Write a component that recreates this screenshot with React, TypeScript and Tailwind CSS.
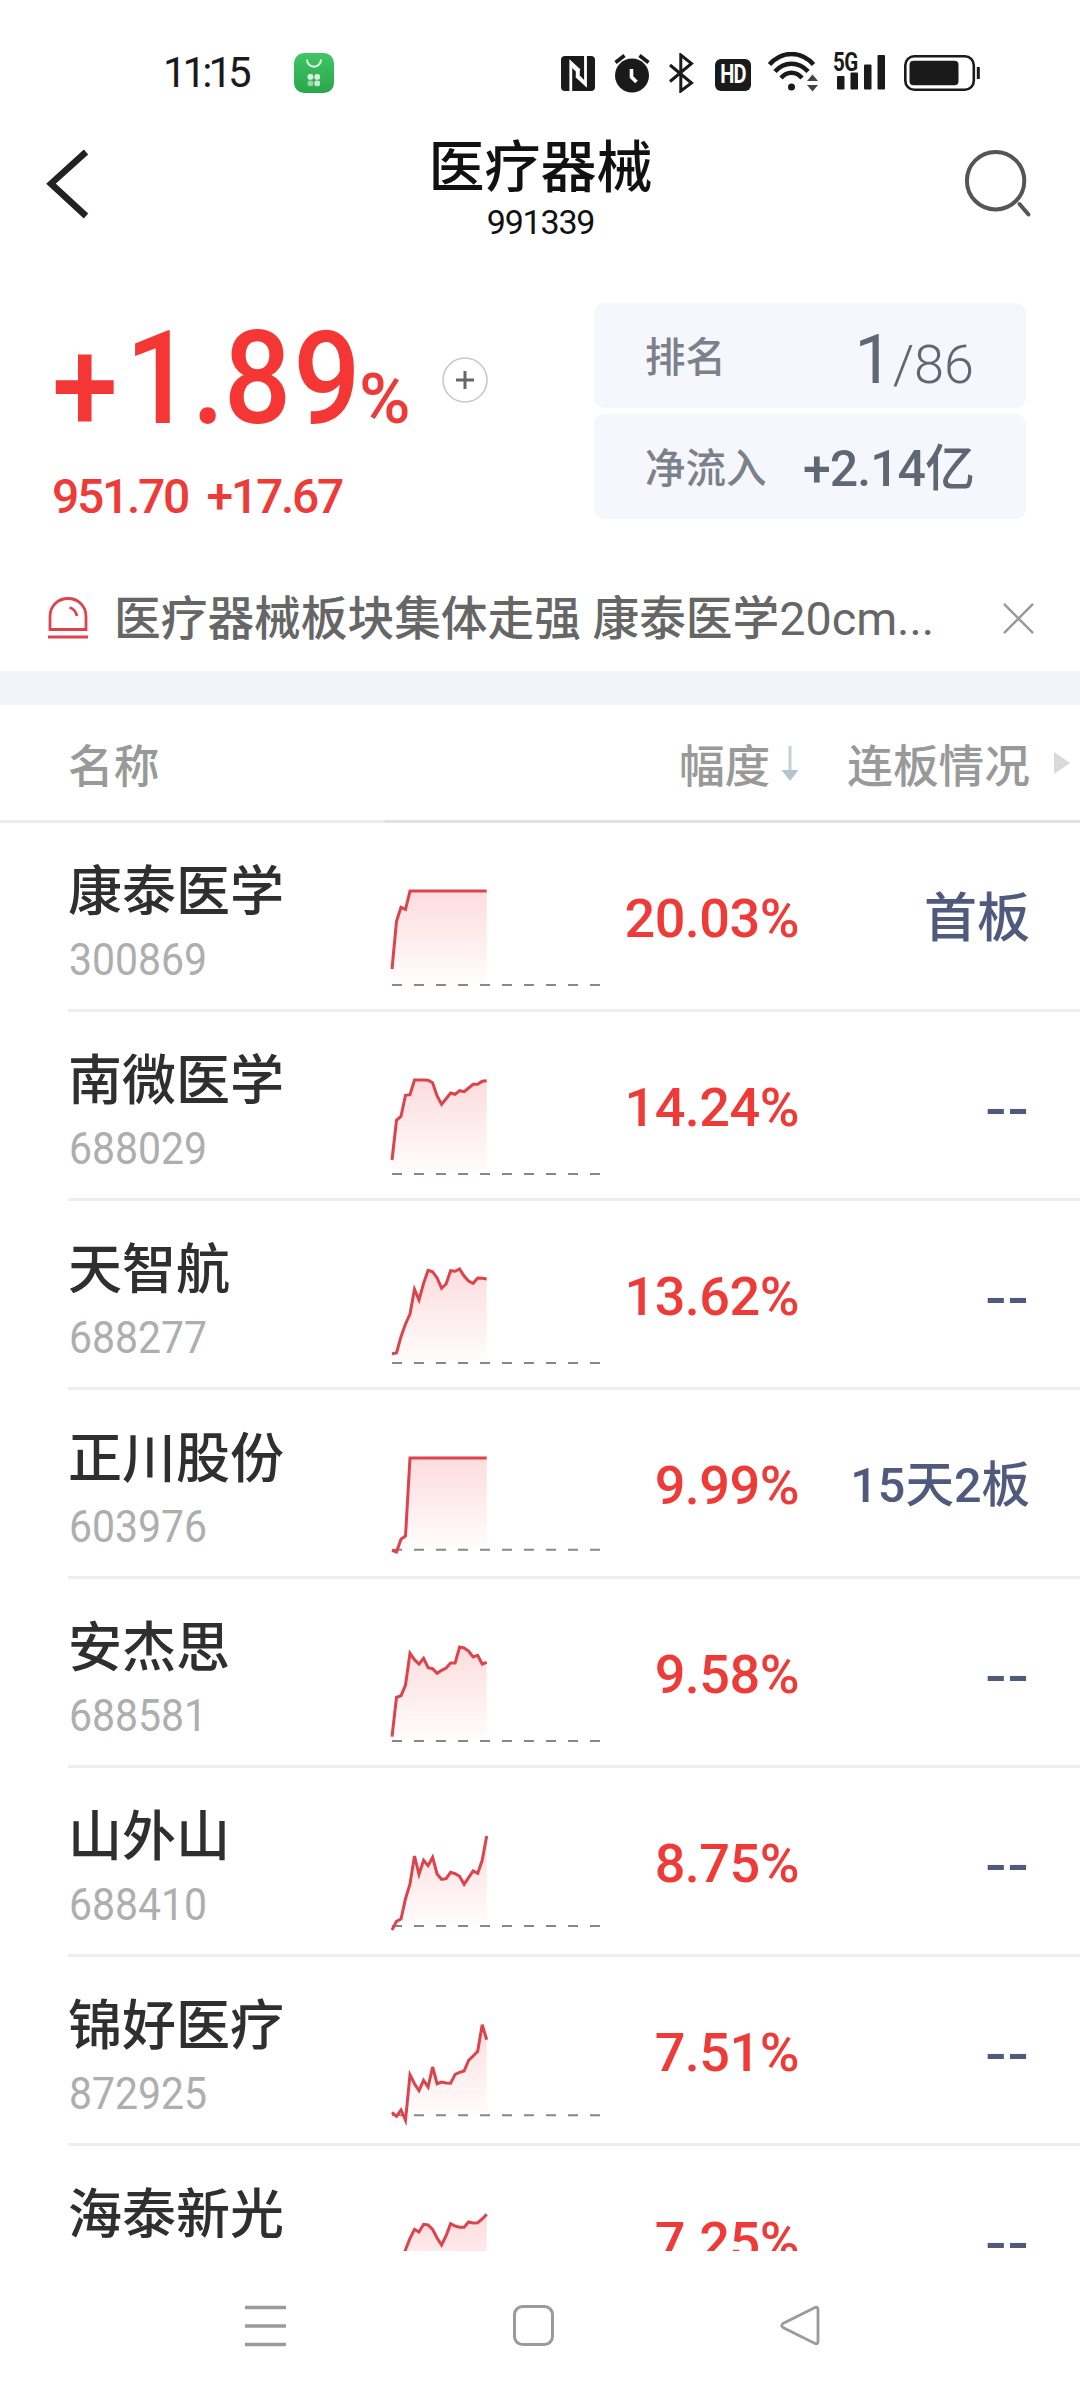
type Stock = {
  name: string;
  code?: string;
  change: string;
  streak?: string;
  base: number;
  trend: number[];
};

const flat = (n: number, y: number) => Array<number>(n).fill(y);

// trend values are y offsets inside the 186px tall row
const stocks: Stock[] = [
  { name: "康泰医学", code: "300869", change: "20.03%", streak: "首板", base: 162, trend: [146, 98.3, 84.3, 86.3, ...flat(18, 68)] },
  {
    name: "南微医学", code: "688029", change: "14.24%", base: 162,
    trend: [148, 108.3, 104.3, 83.3, 82.7, 68, 68, 68, 68.3, 70.7, 84, 92.3, 86.7, 81, 82.3, 78.7, 79.7, 76, 72.3, 72.3, 69.3, 68.7],
  },
  {
    name: "天智航", code: "688277", change: "13.62%", base: 162,
    trend: [152.7, 152, 135.7, 123, 113, 88.3, 99, 82.3, 69.3, 70.7, 77, 87.3, 83, 69.7, 70.3, 68, 75, 80, 82.3, 77, 77.3, 78],
  },
  { name: "正川股份", code: "603976", change: "9.99%", streak: "15天2板", base: 159.7, trend: [160.3, 162, 149.3, 146, ...flat(18, 68)] },
  {
    name: "安杰思", code: "688581", change: "9.58%", base: 162,
    trend: [157.7, 118.3, 116.7, 106, 74.3, 80.7, 85, 79.3, 88.7, 89.7, 94.3, 91.3, 89, 84, 84, 68, 69, 72, 78, 76.3, 85, 83.3],
  },
  {
    name: "山外山", code: "688410", change: "8.75%", base: 158,
    trend: [162, 153.3, 151, 130.7, 116, 88, 106.3, 92.3, 97.7, 89.3, 106, 111.3, 110.7, 104.3, 105.7, 108.3, 116.3, 109.7, 103, 105.3, 92.3, 68],
  },
  {
    name: "锦好医疗", code: "872925", change: "7.51%", base: 158.3,
    trend: [155.3, 159.3, 153, 163.3, 117.7, 126.7, 133.7, 123.3, 130, 110, 126.7, 125, 126, 126.3, 117.3, 115.3, 114, 103.3, 99, 94.3, 67.7, 82.7],
  },
  {
    name: "海泰新光", change: "7.25%", base: 162,
    trend: [150, 132, 118, 103.7, 92.3, 83.3, 86, 78.3, 79, 83.3, 92, 99, 89.7, 77.7, 80, 81.3, 81.3, 76, 77, 76.7, 73, 68.3],
  },
];

function Sparkline({ trend, base, id }: { trend: number[]; base: number; id: string }) {
  const line = trend.map((y, i) => `${(i * 4.508).toFixed(1)},${y}`).join(" ");
  return (
    <svg className="w-[208px] h-[186px] overflow-visible shrink-0" viewBox="0 0 208 186" fill="none">
      <defs>
        <linearGradient id={id} gradientUnits="userSpaceOnUse" x1="0" y1="68" x2="0" y2={base}>
          <stop offset="0" stopColor="#fddcde" />
          <stop offset="1" stopColor="#fffdfd" />
        </linearGradient>
      </defs>
      <polygon points={`0,${base} ${line} 94.7,${base}`} fill={`url(#${id})`} />
      <path d={`M0 ${base}H208`} stroke="#888" strokeWidth="2" strokeDasharray="10 12" />
      <polyline points={line} stroke="#dd434b" strokeWidth="3" />
    </svg>
  );
}

function StatusBar() {
  return (
    <div className="h-[116px] pt-[30px] pl-[163px] flex items-center text-[#1a1a1a]">
      <span className="w-[131px] text-[42px] leading-none tracking-[-4px]">11:15</span>
      <svg className="w-10 h-10" viewBox="0 0 40 40">
        <defs>
          <linearGradient id="shop" x1="0" y1="0" x2="0" y2="1">
            <stop offset="0" stopColor="#40c565" />
            <stop offset="1" stopColor="#2aa54b" />
          </linearGradient>
        </defs>
        <rect width="40" height="40" rx="10" fill="url(#shop)" />
        <path d="M13 6.500c0 9.500 14 9.500 14 0" fill="none" stroke="#e4f8e8" strokeWidth="2" />
        <rect x="13.500" y="21" width="5.800" height="5.800" rx="2.400" fill="#d5f3dc" />
        <rect x="20.300" y="21" width="5.800" height="5.800" rx="2.400" fill="#d5f3dc" />
        <rect x="13.500" y="27.500" width="5.800" height="5.800" rx="2.400" fill="#96d6a6" />
        <rect x="20.300" y="27.500" width="5.800" height="5.800" rx="2.400" fill="#c3ecce" />
      </svg>

      <svg className="ml-[227px] w-[34px] h-[35px]" viewBox="0 0 34 35">
        <rect width="34" height="35" rx="4" fill="#1a1a1a" />
        <path d="M9.800 35V6.500L18.500 14.500M24.500 0V28.500L15.500 20" fill="none" stroke="#fff" strokeWidth="2.800" />
        <path d="M8.400 4 L18.800 13 V19.500 L11.200 12 Z M25.900 30.500 L14.800 21.500 V15.500 L23.100 24 Z" fill="#fff" />
      </svg>
      <svg className="ml-[19px] w-[36px] h-[40px]" viewBox="0 0 36 40" fill="none">
        <circle cx="18" cy="22.500" r="17" fill="#1a1a1a" />
        <path d="M1.500 9.500L10.500 2.500M34.500 9.500L25.500 2.500" stroke="#1a1a1a" strokeWidth="3.600" />
        <path d="M17.500 16V24L22.500 29" stroke="#fff" strokeWidth="3.600" />
      </svg>
      <svg className="ml-[18px] w-[26px] h-[40px]" viewBox="0 0 26 40" fill="none">
        <path d="M2 12L23.500 30L12.800 38V2L23.500 10.500L2 28.500" stroke="#1a1a1a" strokeWidth="3" />
      </svg>
      <div className="ml-[21px] mt-[3px] w-[36px] h-8 rounded-[6px] bg-[#1a1a1a] flex items-center justify-center text-white text-[25px] font-bold leading-none tracking-[-1px]">
        <span className="scale-x-80">HD</span>
      </div>
      <svg className="ml-[16px] w-[52px] h-[42px]" viewBox="0 0 52 42" fill="none" stroke="#1a1a1a" strokeWidth="4.500">
        <path d="M2.500 12.500C15 -1.500 34 -1.500 46.500 12.500" />
        <path d="M8 19.500C17 9 32 9 41 19.500" />
        <path d="M14 26C20 19 29 19 35 26" />
        <circle cx="24.500" cy="35" r="3.500" fill="#1a1a1a" stroke="none" />
        <path d="M40 29L45.500 22.500L51 29ZM40 33H51L45.500 39.500Z" fill="#444" stroke="none" />
      </svg>
      <div className="relative ml-[14px] w-[54px] h-[40px]">
        <span className="absolute -top-[3px] left-0 text-[25px] font-bold leading-none tracking-[-0.500px] origin-left scale-x-82">5G</span>
        <svg className="w-[54px] h-[40px]" viewBox="0 0 54 40" fill="#1a1a1a">
          <rect x="4" y="23" width="7.500" height="13.500" rx="1" />
          <rect x="17.500" y="19.500" width="7.500" height="17" rx="1" />
          <rect x="31" y="11.500" width="7.500" height="25" rx="1" />
          <rect x="44.500" y="2" width="7.500" height="34.500" rx="1" />
        </svg>
      </div>
      <svg className="ml-[17px] w-[76px] h-[36px]" viewBox="0 0 76 36" fill="none">
        <rect x="1.300" y="1.300" width="68.500" height="33.400" rx="9" stroke="#1a1a1a" strokeWidth="2.600" />
        <rect x="5.500" y="5.700" width="49" height="24.500" rx="4" fill="#1a1a1a" />
        <path d="M74.300 12V24" stroke="#1a1a1a" strokeWidth="3" />
      </svg>
    </div>
  );
}

function Header() {
  return (
    <div className="h-[144px] flex justify-between">
      <svg className="mt-[32px] ml-[44px] w-[48px] h-[72px]" viewBox="0 0 48 72" fill="none">
        <path d="M42 4L7 35.700L42 68" stroke="#222" strokeWidth="6.500" />
      </svg>
      <div className="ml-[25px] pt-[24px] flex flex-col items-center text-[#111]">
        <h1 className="text-[56px] leading-[56px] font-medium">医疗器械</h1>
        <p className="mt-[9px] text-[34px] leading-[34px] tracking-[-1.200px]">991339</p>
      </div>
      <svg className="mt-[32px] mr-[48px] w-[68px] h-[72px]" viewBox="0 0 68 72" fill="none" stroke="#555" strokeWidth="4">
        <circle cx="31.600" cy="32.700" r="28.700" />
        <path d="M55.500 56L64.500 66.500" strokeLinecap="round" />
      </svg>
    </div>
  );
}

function Summary() {
  return (
    <div className="h-[259px] pt-[43px] pr-[54px] flex justify-between text-[#f43735]">
      <div>
        <div className="h-[150px] pl-[52px] flex items-baseline">
          <p className="w-[304px] text-[129px] leading-[152px] font-medium whitespace-nowrap origin-left scale-x-92">
            <span className="inline-block translate-y-[8px] tracking-[8px]">+</span>
            <span className="tracking-[-1px]">1</span>
            <span className="tracking-[-1px]">.</span>
            <span className="tracking-[2px]">89</span>
          </p>
          <span className="ml-[3px] text-[70px] leading-none font-medium text-[#ee3b38]">%</span>
          <svg className="ml-[31px] mt-[3px] self-center w-[46px] h-[46px]" viewBox="0 0 46 46" fill="none">
            <circle cx="23" cy="23" r="22" stroke="#c8c8c8" strokeWidth="1.600" />
            <path d="M14 23H32M23 14V32" stroke="#666" strokeWidth="3" />
          </svg>
        </div>
        <p className="mt-[20px] pl-[52px] text-[48px] leading-[48px] font-medium tracking-[-2.300px] [word-spacing:9px] text-[#ee3b38]">951.70 +17.67</p>
      </div>
      <div className="w-[432px] flex flex-col gap-[6px] text-[#5f6674]">
        <div className="h-[105px] pl-[51px] pr-[52px] rounded-[10px] bg-[#f5f7fc] flex items-center justify-between">
          <span className="pt-[6px] text-[40.500px] font-medium text-[#7b808a]">排名</span>
          <span className="pt-[8px] text-[54px] leading-none font-light">
            <span className="text-[68px] font-normal">1</span>/86
          </span>
        </div>
        <div className="h-[105px] pl-[51px] pr-[52px] rounded-[10px] bg-[#f5f7fc] flex items-center justify-between">
          <span className="pt-[6px] text-[40.500px] font-medium text-[#7b808a]">净流入</span>
          <span className="pt-[4px] text-[50px] leading-none font-medium tracking-[-1px]">+2.14亿</span>
        </div>
      </div>
    </div>
  );
}

function Alert() {
  return (
    <div className="mt-[46px] h-[106px] pl-[48px] pr-[46px] flex items-center">
      <svg className="w-[40px] h-[42px]" viewBox="0 0 40 42" fill="none" stroke="#e0434c" strokeWidth="2.800">
        <path d="M2 32.500V19.500C2 9 10 1.500 20 1.500S38 9 38 19.500V32.500Z" />
        <path d="M0 40H40" />
        <path d="M21.500 10.500C25.500 11.500 28 14.500 29 19" />
      </svg>
      <p className="ml-[26px] pt-[3px] flex-1 text-[46.700px] leading-none font-medium text-[#666] whitespace-nowrap">
        医疗器械板块集体走强 康泰医学<span className="font-normal">20cm...</span>
      </p>
      <svg className="w-[31px] h-[31px]" viewBox="0 0 32 32" fill="none">
        <path d="M1 1L31 31M31 1L1 31" stroke="#999" strokeWidth="2.500" />
      </svg>
    </div>
  );
}

function TableHead() {
  return (
    <>
      <div className="h-[115px] pl-[68px] pr-[10px] flex items-center text-[45.700px] leading-none font-medium text-[#999]">
        <span className="flex-1 pt-[10px]">名称</span>
        <span className="pt-[10px]">幅度</span>
        <svg className="ml-[11px] mt-[3px] w-[18px] h-[36px]" viewBox="0 0 18 36">
          <path d="M9 0V26" stroke="#c3d0d8" strokeWidth="3" />
          <path d="M0.500 24H17.500L9 35Z" fill="#b4c4ce" />
        </svg>
        <span className="ml-[48px] pt-[10px]">连板情况</span>
        <svg className="ml-[24px] w-[16px] h-[22px]" viewBox="0 0 16 22">
          <path d="M0 0L16 11L0 22Z" fill="#d9d9d9" />
        </svg>
      </div>
      <div className="h-[3px] flex">
        <div className="w-[385px] bg-[#ebebeb]" />
        <div className="flex-1 bg-[#e1e1e1]" />
      </div>
    </>
  );
}

function Streak({ text }: { text?: string }) {
  if (!text) {
    return <span className="pt-[10px] text-[53px] tracking-[1px] origin-right scale-x-118">--</span>;
  }
  return <span className={text.length > 2 ? "pt-[7px] text-[48.500px]" : "pt-[7px] text-[53px]"}>{text}</span>;
}

function StockRow({ stock, index }: { stock: Stock; index: number }) {
  return (
    <div className="ml-[68px] pr-[50px] h-[189px] border-b-3 border-[#eee] flex">
      <div className="w-[324px] pt-[43px]">
        <p className="text-[54px] leading-[54px] font-medium text-[#2f2f2f]">{stock.name}</p>
        {stock.code && (
          <p className="mt-[17px] pl-px text-[45px] leading-[45px] text-[#aeaeae] origin-left scale-x-91">{stock.code}</p>
        )}
      </div>
      <Sparkline trend={stock.trend} base={stock.base} id={`trend-${index}`} />
      <p className="w-[199px] h-[186px] pt-[5px] flex items-center justify-end text-[54px] leading-none font-medium tracking-[-0.500px] text-[#ee3b38]">
        {stock.change}
      </p>
      <div className="flex-1 h-[186px] flex items-center justify-end leading-none font-medium text-[#4f5a7d] whitespace-nowrap">
        <Streak text={stock.streak} />
      </div>
    </div>
  );
}

function NavBar() {
  return (
    <div className="h-[149px] pl-[245px] flex items-center">
      <svg className="w-[41px] h-[42px]" viewBox="0 0 41 42" stroke="#9b9b9b" strokeWidth="3.500">
        <path d="M0 2.500H41M0 21H41M0 39.500H41" />
      </svg>
      <svg className="ml-[227px] w-[41px] h-[41px]" viewBox="0 0 41 41" fill="none">
        <rect x="1.500" y="1.500" width="38" height="38" rx="8" stroke="#9b9b9b" strokeWidth="3" />
      </svg>
      <svg className="ml-[226px] w-[40px] h-[41px]" viewBox="0 0 40 41" fill="none">
        <path d="M35 2.500L3 18.500Q0.500 20.500 3 22.500L35 38.500Q38 39.500 38 36.500V4.500Q38 1.500 35 2.500Z" stroke="#9b9b9b" strokeWidth="2.800" />
      </svg>
    </div>
  );
}

export default function App() {
  return (
    <div className="w-[1080px] h-[2400px] bg-white overflow-hidden font-[Roboto,'Noto_Sans_CJK_SC',sans-serif]">
      <StatusBar />
      <Header />
      <Summary />
      <Alert />
      <div className="h-[34px] bg-[#f3f4f9]" />
      <TableHead />
      <div className="h-[1428px] overflow-hidden">
        {stocks.map((s, i) => (
          <StockRow key={s.name} stock={s} index={i} />
        ))}
      </div>
      <NavBar />
    </div>
  );
}
